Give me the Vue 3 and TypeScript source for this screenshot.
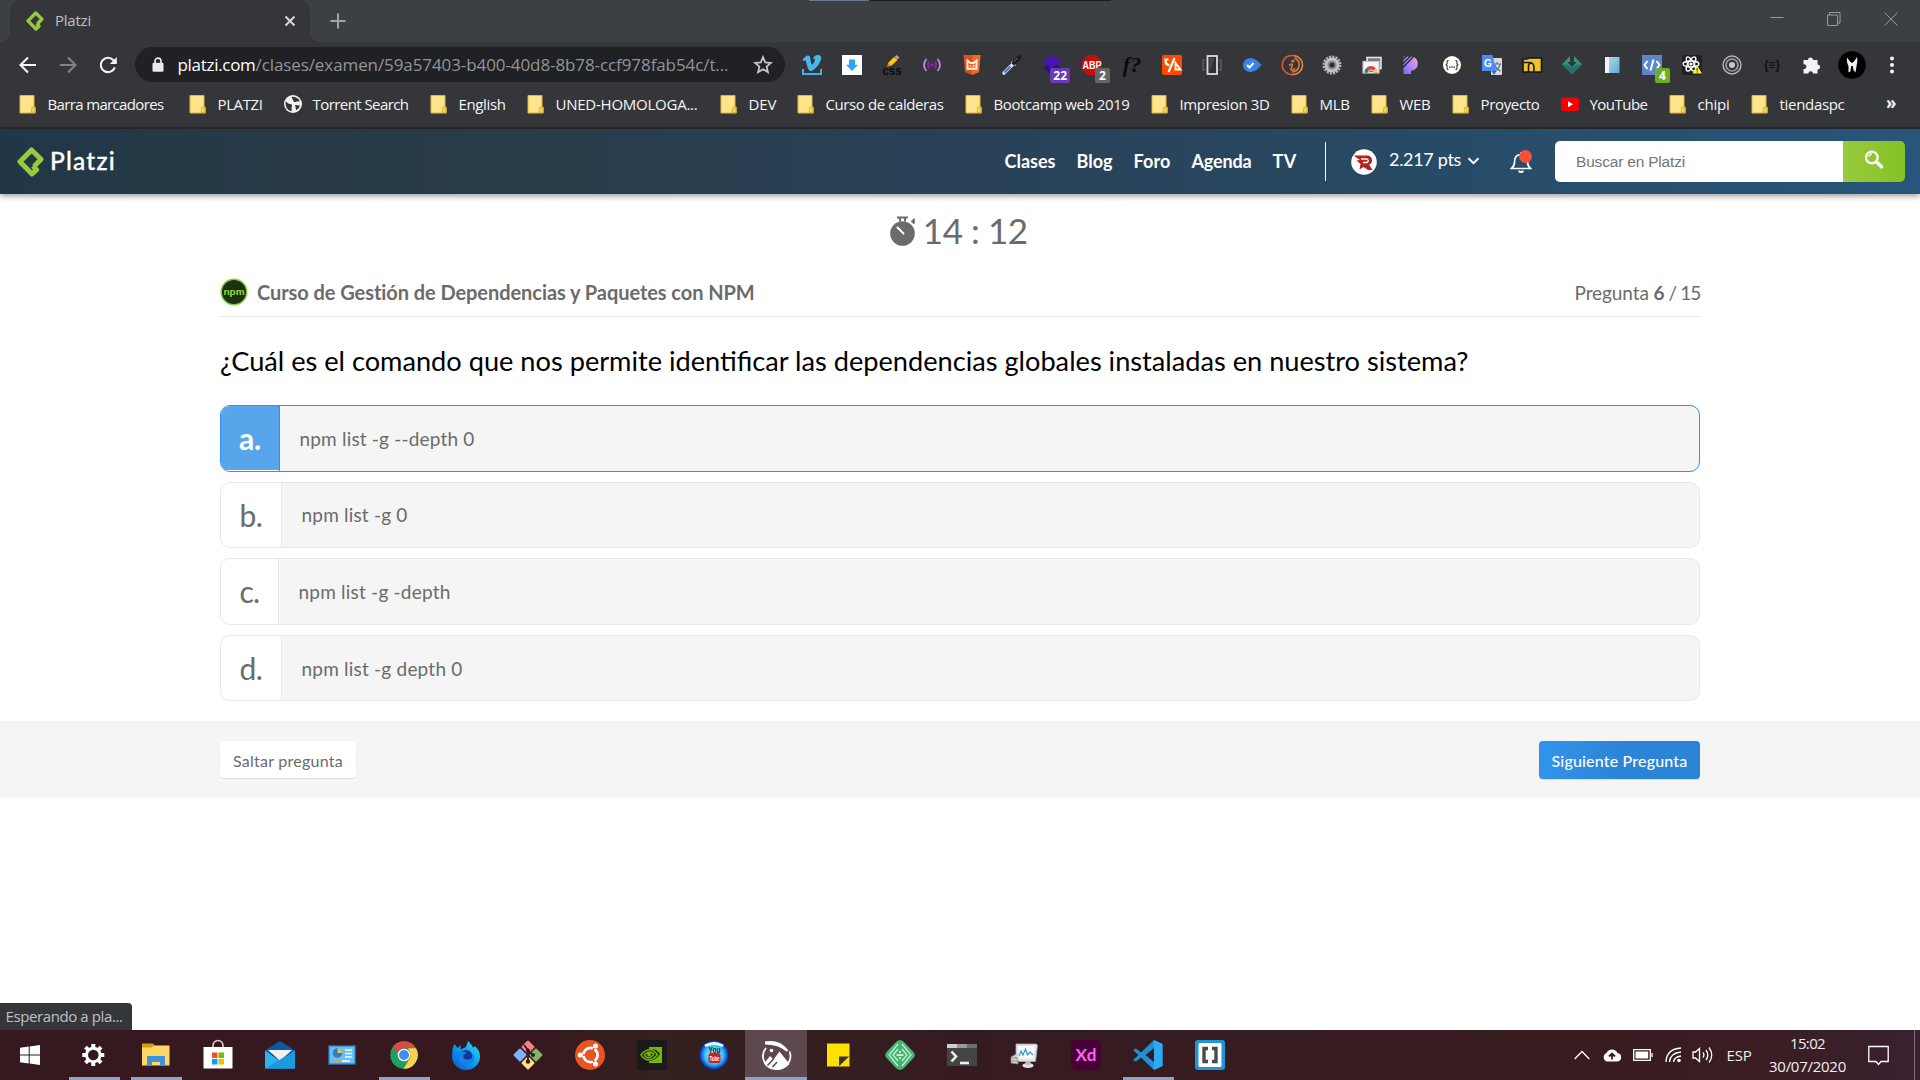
<script setup lang="ts">
import type { Directive } from 'vue'

interface Bookmark { x: number; icon: string; label: string; w: number }
interface Extension { name: string; art: string; badge?: string; tone?: string }
interface Choice { letter: string; text: string; box: number; lw: number; tw: number; selected?: boolean }
interface TaskItem { name: string; art: string; running?: boolean; active?: boolean }

// Spreads a label over a fixed advance width by adjusting its tracking,
// or its type size when the .size modifier is set (keeps ligatures).
const vFit: Directive<HTMLElement, number, 'size'> = {
  mounted(el, binding) {
    const n = (el.textContent ?? '').length
    if (!n) return
    const w = el.getBoundingClientRect().width
    if (binding.modifiers.size) {
      const size = parseFloat(getComputedStyle(el).fontSize)
      el.style.fontSize = `${((size * binding.value) / w).toFixed(3)}px`
    } else {
      el.style.letterSpacing = `${((binding.value - w) / n).toFixed(3)}px`
    }
  },
}

const folder = '<path d="M4 3.5H18V15h1.2v6H4z" fill="#ffe48c" stroke="#d9b93f" stroke-width="1"/><path d="M15.8 15.3H19v5.4H15z" fill="#f7d552" stroke="#cfae2c" stroke-width=".8"/>'
const globe = '<circle cx="12" cy="12" r="9" fill="#f1f3f4"/><path d="M4.6 9.5c2 1 2.6 2.6 4.6 2.6 1.6.2 2.2 1.2 1.6 2.4-.6 1.3.2 2.4-.2 4.7C7 18.7 4 15.500 4.600 9.500zM11 4.800c3-.5 6.500 1.500 7.800 4.200-1.500 1-2.800.2-3.800.8-1.200.8-2.800 0-2.700-1.300.1-1.200-2-1.600-1.300-3.700zM14 13c2 0 3 .8 5 .2-.4 2-2 4-4 5-.4-2-.2-3-1-5.200z" fill="#35363a"/>'
const youtube = '<rect x="3" y="5.500" width="18" height="13.500" rx="3" fill="#f60000"/><path d="M10 9.300l5 3-5 3z" fill="#fff"/>'

const bookmarks: Bookmark[] = [
  { x: 16, icon: folder, label: 'Barra marcadores', w: 116 },
  { x: 186, icon: folder, label: 'PLATZI', w: 45 },
  { x: 281, icon: globe, label: 'Torrent Search', w: 96 },
  { x: 427, icon: folder, label: 'English', w: 47 },
  { x: 524, icon: folder, label: 'UNED-HOMOLOGA...', w: 142 },
  { x: 717, icon: folder, label: 'DEV', w: 28 },
  { x: 794, icon: folder, label: 'Curso de calderas', w: 118 },
  { x: 962, icon: folder, label: 'Bootcamp web 2019', w: 136 },
  { x: 1148, icon: folder, label: 'Impresion 3D', w: 90 },
  { x: 1288, icon: folder, label: 'MLB', w: 30 },
  { x: 1368, icon: folder, label: 'WEB', w: 31 },
  { x: 1449, icon: folder, label: 'Proyecto', w: 59 },
  { x: 1558, icon: youtube, label: 'YouTube', w: 58 },
  { x: 1666, icon: folder, label: 'chipi', w: 32 },
  { x: 1748, icon: folder, label: 'tiendaspc', w: 65 },
  { x: 1880, icon: '', label: '', w: 0 },
]
const slotWidth = (i: number) => bookmarks[i + 1].x - bookmarks[i].x

const mono = 'font-family="Liberation Sans, Arial, sans-serif"'
const extensions: Extension[] = [
  { name: 'vimeo', art: '<path d="M3 16v5h18v-5" fill="none" stroke="#3db2ea" stroke-width="2"/><path d="M2.500 6.500c2-2 4-4 5.500-4 2.500 0 2.200 3 2.900 6 .4 2 .7 3 1.200 3 .8 0 2.800-3.300 2.800-4.600 0-1.200-1-1.200-2-.8.8-2.600 2.500-4 5-4 2.200 0 3.500 1.200 3.300 3.400-.3 4.500-7 12.500-10.500 12.500-2.500 0-3.300-4.500-4.400-8.500C5.700 7.500 5.500 7 3.500 8z" fill="#46b8ee"/>' },
  { name: 'download', art: '<rect x="2" y="2" width="20" height="20" fill="#fff"/><path d="M9 6.500h6v5.300h3L12 18l-6-6.200h3z" fill="#30a4f2"/>' },
  { name: 'css', art: `<path d="M8.500 9.500l5.500-5.500 3.500 3-6 5.500-4 1z" fill="#fc0"/><path d="M14.500 3.700L16.500 2l3 2.500-2 2z" fill="#e98b95"/><path d="M8.500 9.500L7 13.500l3.500-1z" fill="#d88a10"/><text x="12" y="21.500" text-anchor="middle" ${mono} font-size="12" font-weight="700" fill="#0c0c0c" textLength="19" lengthAdjust="spacingAndGlyphs">css</text>` },
  { name: 'signal', art: '<g fill="none" stroke="#b052cd" stroke-width="1.800"><path d="M9 8.500q-2 3.500 0 7M15 8.500q2 3.500 0 7" stroke="#8e24aa"/><path d="M6.500 6q-5 6 0 12M17.500 6q5 6 0 12" stroke="#c58ae0"/></g><circle cx="12" cy="12" r="1.700" fill="#8e24aa"/>' },
  { name: 'html cat', art: '<path d="M3.500 2h17l-1.500 17-7 3-7-3z" fill="#dd5019"/><path d="M12 2h8.500L19 19l-7 3z" fill="#ec6a21"/><path d="M7.500 15.800V7.500l3 2.500h3l3-2.500v8.300z" fill="none" stroke="#ffeee4" stroke-width="1.900"/><path d="M9.700 13h1.600M12.900 13h1.600" stroke="#fff" stroke-width="1.300"/>' },
  { name: 'picker', art: '<path d="M4 20l8-8" stroke="#dfe3ea" stroke-width="3.400" stroke-linecap="round"/><path d="M4.500 19.500l6-6" stroke="#3d6be0" stroke-width="2"/><path d="M11.500 8.500l4 4" stroke="#aaa" stroke-width="1.800"/><path d="M14 10l5.500-6" stroke="#17191c" stroke-width="3.800" stroke-linecap="round"/><path d="M14.500 8.500l3-3.500" stroke="#777" stroke-width="1"/>' },
  { name: 'layers', art: '<path d="M12 9l9 6-9 7-9-7z" fill="#2c0f87"/><path d="M12 2l10 6.500-10 7L2 9z" fill="#4614b0"/>', badge: '22', tone: '#673ab7' },
  { name: 'abp', art: `<path d="M8 2h8.500L22 8v8l-5.500 6H8L2 16V8z" fill="#c70d0d"/><text x="12" y="15.800" text-anchor="middle" ${mono} font-size="10" font-weight="700" fill="#fff" textLength="19" lengthAdjust="spacingAndGlyphs">ABP</text>`, badge: '2', tone: '#666' },
  { name: 'font finder', art: '<text x="12" y="19" text-anchor="middle" font-family="Liberation Serif, serif" font-style="italic" font-weight="700" font-size="22" fill="#0b0b0b">f?</text>' },
  { name: 'tag', art: '<rect x="2" y="2" width="20" height="20" rx="2" fill="#fe4a00"/><path d="M8.500 6.500H5.500l.5 4 3 2M14.500 5l-6 14" stroke="#fff" stroke-width="2.200" fill="none"/><path d="M15.500 10v6.500h5z" fill="none" stroke="#fff" stroke-width="1.900"/>' },
  { name: 'viewport', art: '<path d="M5 7H3v10h2M19 7h2v10h-2" stroke="#5e6063" stroke-width="1.400" fill="none"/><rect x="7.500" y="3" width="9.500" height="18" fill="#2e3033" stroke="#dcdcdc" stroke-width="1.800"/><path d="M9.500 19V5h5z" fill="#484a4c"/>' },
  { name: 'check tag', art: '<path d="M10 5c4 0 7 2 11.500 7C17 17 14 19 10 19a7 7 0 010-14z" fill="#3b82e6"/><path d="M7 12l2.500 2.500L13.500 10" stroke="#fff" stroke-width="2" fill="none"/>' },
  { name: 'info ring', art: '<g fill="none" stroke-width="1.600"><path d="M17 4A9.500 9.500 0 1012 21.500" stroke="#e2572d"/><path d="M14 2.500a9.500 9.500 0 01-2 19" stroke="#e08b3d"/><path d="M9 12.500q4-3 3.200 0l-1.300 4q2.500 1.500 4-1.500M14.500 5q5.500 2.500 4.500 8t-7 6" stroke="#e8743a"/></g><circle cx="13" cy="8" r="1.600" fill="#e8743a"/>' },
  { name: 'gear', art: '<circle cx="12" cy="12" r="8.300" fill="none" stroke="#b4b4b4" stroke-width="2.400" stroke-dasharray="2.100 1.160"/><circle cx="12" cy="12" r="7.400" fill="#c4c4c4"/><circle cx="12" cy="12" r="4.600" fill="#8a8a8a"/><circle cx="12" cy="12" r="2.500" fill="#2b2b2d"/>' },
  { name: 'windows', art: '<rect x="7" y="4.500" width="14" height="11" fill="#777" stroke="#e3e3e3" stroke-width="1.600"/><rect x="3" y="8.500" width="16" height="11.500" fill="#f7f7f7" stroke="#c6c6c6" stroke-width="1.200"/><path d="M4.500 19.500a6.500 6.500 0 0113 0z" fill="#da4437"/><path d="M4.500 19.500a6 6 0 012-4.500l3 4.500z" fill="#139d58"/><path d="M17.500 19.500a6 6 0 00-2-4.500l-3 4.500z" fill="#ffcd40"/><path d="M8.300 19.500a2.700 2.700 0 015.400 0z" fill="#4285f4" stroke="#fff" stroke-width=".7"/>' },
  { name: 'pandora', art: '<defs><linearGradient id="pg" x1="0" y1="1" x2="1" y2="0"><stop offset="0" stop-color="#7666f0"/><stop offset=".5" stop-color="#b48af0"/><stop offset="1" stop-color="#f0a0d0"/></linearGradient></defs><path d="M3.500 21V3.500H13a7.500 7.500 0 010 14h-2V21z" fill="url(#pg)"/><path d="M3 6.500l4-4M3 10.500l8-8M3 14.500L14 3" stroke="#2d2c3a" stroke-width="1.500"/>' },
  { name: 'json', art: `<circle cx="12" cy="12" r="9" fill="#fff"/><text x="12" y="15.300" text-anchor="middle" ${mono} font-size="10.500" font-weight="700" fill="#333" textLength="13" lengthAdjust="spacingAndGlyphs">{...}</text>` },
  { name: 'translate', art: `<rect x="11" y="5" width="11" height="17" rx="1" fill="#d9dbde"/><path d="M13.500 11h7.500M17 9v2M15 18q4-2 5-7M15 12q1 4 5.500 6" stroke="#5c7084" stroke-width="1.200" fill="none"/><path d="M2 2h10.500l4 16H2z" fill="#4c8bf5"/><path d="M11.500 18h5l-2.500 4z" fill="#3367d6"/><text x="8" y="13.500" text-anchor="middle" ${mono} font-size="10" font-weight="700" fill="#fff">G</text>` },
  { name: 'yellow n', art: '<path d="M3 6h4l2-1h12.500v14H3z" fill="#f1c232" stroke="#14171c" stroke-width="1.600"/><path d="M3.500 9.500H9q5 0 5 5V19M8.500 19v-5.500q0-3.500 3-3.500" fill="none" stroke="#191d22" stroke-width="1.600"/>' },
  { name: 'arrow gem', art: '<path d="M10 3v6H7l5 5 5-5h-3V3l8 8.500L12 21 2 11.500z" fill="#2f9a80"/><path d="M2 11.500h5l5 3.500 5-3.500h5L12 21z" fill="#27706f"/>' },
  { name: 'notebook', art: '<defs><linearGradient id="nb" x1="0" y1="0" x2="1" y2="1"><stop offset="0" stop-color="#b9e0f0"/><stop offset="1" stop-color="#5fa9cf"/></linearGradient></defs><rect x="5" y="4" width="14.500" height="16" fill="url(#nb)"/><rect x="5" y="4" width="4" height="16" fill="#f1f5fb"/>' },
  { name: 'code', art: '<rect x="2" y="2" width="20" height="20" fill="#5c86c9"/><path d="M7.500 8L4.500 12l3 4M16.500 8l3 4-3 4M13.500 6.500l-3 11" stroke="#fff" stroke-width="2" fill="none"/>', badge: '4', tone: '#6cae28' },
  { name: 'react', art: '<rect x="2" y="2" width="20" height="20" rx="2" fill="#202020"/><g fill="none" stroke="#fff" stroke-width="1.300"><ellipse cx="11" cy="11" rx="8" ry="3"/><ellipse cx="11" cy="11" rx="8" ry="3" transform="rotate(60 11 11)"/><ellipse cx="11" cy="11" rx="8" ry="3" transform="rotate(120 11 11)"/></g><circle cx="11" cy="11" r="1.600" fill="#fff"/><path d="M17 12l5 8.500H12.500z" fill="#ffee3c"/><path d="M17.200 15v2.800M17.200 18.600v1" stroke="#333" stroke-width="1.200"/>' },
  { name: 'rings', art: '<g fill="none" stroke="#b5b6b8"><circle cx="12" cy="12" r="9" stroke-width="1.400"/><circle cx="12" cy="12" r="6" stroke-width="1.700" stroke="#9b9c9e"/></g><circle cx="12" cy="12" r="3" fill="#c9c9cb"/>' },
  { name: 'braces', art: `<text x="12" y="15.800" text-anchor="middle" ${mono} font-size="12" font-weight="700" fill="#101113" textLength="16" lengthAdjust="spacingAndGlyphs">{≡}</text>` },
  { name: 'puzzle', art: '<path d="M3.500 7.500H8a2.500 2.500 0 115 0h4.500V12a2.500 2.500 0 110 5v4H13a2.300 2.300 0 10-4.600 0H3.500v-4.500a2.400 2.400 0 100-4.700z" fill="#f1f3f4" transform="translate(0 -.5)"/>' },
]

const choices: Choice[] = [
  { letter: 'a.', text: 'npm list -g --depth 0', box: 58, lw: 22, tw: 175, selected: true },
  { letter: 'b.', text: 'npm list -g 0', box: 60, lw: 23, tw: 106 },
  { letter: 'c.', text: 'npm list -g -depth', box: 57, lw: 20, tw: 152 },
  { letter: 'd.', text: 'npm list -g depth 0', box: 60, lw: 23, tw: 161 },
]

const nav = [
  { label: 'Clases', w: 51 },
  { label: 'Blog', w: 36 },
  { label: 'Foro', w: 37 },
  { label: 'Agenda', w: 60 },
  { label: 'TV', w: 24 },
]

// Taskbar glyphs, drawn on a 32 x 32 grid.
const tasks: TaskItem[] = [
  { name: 'settings', running: true, art: '<g transform="translate(-.7 0)"><g stroke="#fff" stroke-width="4"><path d="M16 5v22M8.200 8.200l15.600 15.600M5 16h22M8.200 23.800L23.800 8.200"/></g><circle cx="16" cy="16" r="8.300" fill="#fff"/><circle cx="16" cy="16" r="5.300" fill="#35191e"/></g>' },
  { name: 'explorer', running: true, art: '<path d="M2 4.500h11l2 2.500v4H2z" fill="#dd9b0c"/><path d="M2 8.500h9.500L14 6.500h15.500v20H2z" fill="#ffd766"/><path d="M7 27v-9q0-1 1-1h16q1 0 1 1v9h-5v-4h-8v4z" fill="#3d94d8"/>' },
  { name: 'store', art: '<path d="M11 9V6.500a4 4 0 0110 0V9" fill="none" stroke="#d8d0d1" stroke-width="1.600"/><path d="M1.500 8h29v21.500h-29z" fill="#fff"/><path d="M10 13.500h5.500V19H10z" fill="#f25022"/><path d="M16.500 13.500H22V19h-5.500z" fill="#7fba00"/><path d="M10 20h5.500v5.500H10z" fill="#00a4ef"/><path d="M16.500 20H22v5.500h-5.500z" fill="#ffb900"/>' },
  { name: 'mail', art: '<path d="M1 11.500L16 2l15 9.500v4H1z" fill="#0c59a4"/><path d="M4 11h24L16 22z" fill="#f1f1f1"/><path d="M1 11.500l15 10.500 15-10.500v18H1z" fill="#2eb1ef"/><path d="M1 29.500L31 11.500v18z" fill="#1a9be0"/>' },
  { name: 'control', art: '<rect x="3" y="7" width="26" height="18" fill="#6cc0f0" stroke="#2f7fc0" stroke-width="1.300"/><circle cx="11.500" cy="14" r="4.800" fill="#2c7fc8"/><path d="M11.500 14V9.200a4.800 4.800 0 014.800 4.800z" fill="#f4b942"/><path d="M19 11h7M19 14.500h7M19 18h7" stroke="#e6f5ff" stroke-width="1.700"/><path d="M7 22h17" stroke="#fff" stroke-width="1.500"/><path d="M7 22h9" stroke="#d88b16" stroke-width="1.500"/>' },
  { name: 'chrome', running: true, art: '<circle cx="16" cy="16" r="13.700" fill="#1fa15d"/><path d="M16 2.300a13.700 13.700 0 0111.900 7H16a7 7 0 00-6 3.500L4.600 8.300A13.700 13.700 0 0116 2.300z" fill="#dc4b3e"/><path d="M28 9.300a13.700 13.700 0 01-12.500 20.400l6.500-10.500q1.500-5-2-9.900z" fill="#ffd04b"/><circle cx="16" cy="16" r="6.300" fill="#fff"/><circle cx="16" cy="16" r="5" fill="#4688f4"/>' },
  { name: 'firefox', art: '<defs><linearGradient id="ff" x1="1" y1="0" x2="0" y2="1"><stop offset="0" stop-color="#2ce0f5"/><stop offset=".5" stop-color="#0b9cf2"/><stop offset="1" stop-color="#0653c8"/></linearGradient></defs><path d="M3 8l1.500-3 3 4 3-3v4.500L16 8l2-6q5 5 5 7l1.500-2Q30 11 30 17.500A14 13.500 0 012 17.500Q2 12 3 8z" fill="url(#ff)"/><circle cx="16" cy="17.500" r="6.500" fill="#14359a"/><path d="M8 14q5-3 9 0-3 1-4 3 1 4 5 3.500 5 0 5-6 3 5-1 9.500-8 4-13-3-2-4-1-7z" fill="#1683ec"/>' },
  { name: 'git', art: '<g transform="rotate(45 16 16)"><rect x="5.500" y="5.500" width="9.700" height="9.700" rx="1" fill="#f77f8b"/><rect x="16.800" y="5.500" width="9.700" height="9.700" rx="1" fill="#80b963"/><rect x="5.500" y="16.800" width="9.700" height="9.700" rx="1" fill="#80b3ff"/><rect x="16.800" y="16.800" width="9.700" height="9.700" rx="1" fill="#ffe080"/></g><path d="M12 6l4 5v13M16 12l5 4" stroke="#35191e" stroke-width="1.800" fill="none"/><circle cx="16" cy="22.500" r="2.200" fill="#35191e"/><circle cx="21" cy="16" r="2" fill="#35191e"/><circle cx="16" cy="11.500" r="2" fill="#35191e"/>' },
  { name: 'ubuntu', art: '<circle cx="16" cy="16" r="15" fill="#e95420"/><circle cx="16.500" cy="16" r="7" fill="none" stroke="#fff" stroke-width="3"/><path d="M16 16L5 16M16 16l6-10M16 16l6 10" stroke="#e95420" stroke-width="1.600"/><circle cx="16.500" cy="16" r="5.500" fill="#e95420"/><circle cx="6.200" cy="16" r="2.500" fill="#fff"/><circle cx="21.500" cy="7" r="2.500" fill="#fff"/><circle cx="21.500" cy="25" r="2.500" fill="#fff"/>' },
  { name: 'nvidia', art: '<rect x="1" y="1" width="30" height="30" fill="#1a1a1a"/><path d="M13 8h13v16H13z" fill="#76b900"/><path d="M4 15.500q7-8 16-4.500l4 4q-5 7-12 7.500Q6 21 4 15.500z" fill="#1a1a1a"/><path d="M5 15.500q7-7 13-3.500l3.500 3.500Q17 21 12 21q-5-1-7-5.500zM8.500 15.500q5-4.500 9.500-.5-4 5-7 3.500-2-1-2.500-3z" fill="none" stroke="#76b900" stroke-width="1.500"/><circle cx="13" cy="15.500" r="2" fill="#76b900"/>' },
  { name: 'youtube dl', art: `<defs><radialGradient id="yd"><stop offset="0" stop-color="#c6f8ff"/><stop offset=".65" stop-color="#33c0f6"/><stop offset="1" stop-color="#0727b8"/></radialGradient></defs><circle cx="16" cy="16" r="14.500" fill="url(#yd)"/><path d="M7 7q9-5 18 0" stroke="#e8fcff" stroke-width="3" fill="none"/><rect x="10.500" y="14" width="12" height="10" rx="2.500" fill="#d21f1b"/><text x="16.500" y="13.500" text-anchor="middle" ${mono} font-size="9" font-weight="700" fill="#222" textLength="12" lengthAdjust="spacingAndGlyphs">You</text><text x="16.500" y="22" text-anchor="middle" ${mono} font-size="8" font-weight="700" fill="#fff" textLength="10" lengthAdjust="spacingAndGlyphs">Tube</text>` },
  { name: 'greenshot', running: true, active: true, art: '<path d="M5 2.500q15-2.500 23.500 9l-2 1Q18.500 5.500 5 5.500z" fill="#fff"/><path d="M6 9a13.700 13 0 1023.500 3.500" fill="none" stroke="#fff" stroke-width="1.800"/><path d="M4 24.500l6-7.500 3.500 3.500 6-8 10 12.500q-5 5.500-13 5.500T4 24.500z" fill="#fff"/><path d="M7.500 26.500l6-6.500M17 23l-4.500 5" stroke="#5c484d" stroke-width="1.500"/><circle cx="11.500" cy="11.500" r="1.800" fill="#fff"/>' },
  { name: 'notes', art: '<path d="M5 4.500h22.500V17L18 27.500H5z" fill="#ffe100"/><path d="M17 27.500V17.500h10.500z" fill="#3a3430"/><path d="M17 27.500L27.500 17v10.500z" fill="#ffe100"/>' },
  { name: 'emerald', art: '<path d="M16 1q2.500 0 5 3l8.500 9q2.500 3 0 6L21 28q-5 6-10 0l-8.500-9q-2.500-3 0-6L11 4q2.500-3 5-3z" fill="#48b274"/><path d="M14 5L5 16l9 11M18 5l9 11-9 11M14 10l-5 6 5 6M18 10l5 6-5 6" fill="none" stroke="#c1efd2" stroke-width="1.300"/><path d="M12.500 16h7M15 13h2M15 19h2" stroke="#eafff0" stroke-width="1.500"/>' },
  { name: 'terminal', art: '<rect x="1" y="5" width="30" height="22" rx="1" fill="#444"/><path d="M1 5h10v4H1z" fill="#d0d0d0"/><path d="M11 5h10v4H11z" fill="#999"/><path d="M21 5h10v4H21z" fill="#6d6d6d"/><path d="M5.500 12.500L10 17.500l-4.500 5" stroke="#eee" stroke-width="2.600" fill="none"/><path d="M14 24h9" stroke="#eee" stroke-width="2.600"/>' },
  { name: 'monitor', art: '<path d="M3 18l7-4v11l-7-1z" fill="#d6d6d6" stroke="#888" stroke-width=".8"/><path d="M8 5h20l1.500 1-2 16.500H11L8 20z" fill="#e4e4e4" stroke="#aaa" stroke-width=".8"/><path d="M10 7h17l-1.500 12.500H10.500z" fill="#f7fbff"/><path d="M11 17l2-5 2 4 2.500-6 2 6 2.500-3 3 3" fill="none" stroke="#3d94d6" stroke-width="1.200"/><path d="M3.500 19h7M3.500 22h7" stroke="#777" stroke-width=".8"/><ellipse cx="20" cy="26.500" rx="5.500" ry="2.600" fill="#e5e5e5"/><path d="M17.500 22h5v4h-5z" fill="#bbb"/>' },
  { name: 'xd', art: '<rect x="1" y="1" width="30" height="30" rx="5" fill="#470137"/><text x="16" y="22" text-anchor="middle" font-family="Lato, sans-serif" font-size="17" font-weight="700" fill="#ff61f6" textLength="21">Xd</text>' },
  { name: 'code', running: true, art: '<path d="M22 1l8.500 4v22L22 31 9 18.500 4 22.500l-3-1.500 5.500-5L1 11l3-1.500 5 4z" fill="#1f8fd8"/><path d="M22 9l-8.500 7 8.500 7z" fill="#35191e"/><path d="M22 1l8.500 4v22L22 31z" fill="#2fa9f3"/>' },
  { name: 'brackets', art: '<rect x="1" y="1" width="30" height="30" rx="3" fill="#1d95d6"/><rect x="4.500" y="4" width="23" height="24" rx="1.500" fill="#fff"/><path d="M14 9.500H10v13h4M18 9.500h4v13h-4" fill="none" stroke="#4a4a4a" stroke-width="3.400"/>' },
]
</script>

<template>
  <div class="desktop">
    <div class="tabstrip">
      <span class="edge left"></span>
      <div class="tab">
        <svg class="favicon" viewBox="0 0 27 30"><path d="M17 19.500L24 12.200L14.500 3L3 14.800L15 27L19.500 22.800L16 19" /></svg>
        <span class="tab-title" v-fit="36">Platzi</span>
        <svg class="tab-close" viewBox="0 0 12 12"><path d="M1.500 1.500l9 9M10.500 1.500l-9 9" /></svg>
      </div>
      <span class="edge right"></span>
      <svg class="new-tab" viewBox="0 0 16 16"><path d="M8 .5v15M.5 8h15" /></svg>
      <span class="top-mark"></span>
      <div class="win">
        <svg viewBox="0 0 14 14"><path d="M.5 5.500h13" /></svg>
        <svg viewBox="0 0 14 14"><path d="M.5 3h10v10.500H.5zM2.500 3V.5H13V11H10.500" /></svg>
        <svg viewBox="0 0 14 14"><path d="M.5 .5l13 13M13.500 .5l-13 13" /></svg>
      </div>
    </div>

    <div class="toolbar">
      <svg class="tool" viewBox="0 0 20 20"><path d="M18 10H3M10 2.500L2.500 10l7.500 7.500" /></svg>
      <svg class="tool dim" viewBox="0 0 20 20"><path d="M2 10h15M10 2.500l7.500 7.500-7.500 7.500" /></svg>
      <svg class="tool" viewBox="0 0 20 20"><path d="M16.800 12.300a7.200 7.200 0 11-1.600-7.400L17 7" /><path class="solid" d="M18.800 2v7h-7z" /></svg>
      <div class="omnibox">
        <svg class="lock" viewBox="0 0 12 16"><path d="M3 7V4.200a3 3 0 016 0V7" fill="none" stroke="#e8eaed" stroke-width="1.700" /><rect x=".5" y="5.800" width="11" height="9" rx="1.200" fill="#e8eaed" /></svg>
        <span class="host" v-fit="78">platzi.com</span>
        <span class="path" v-fit="473">/clases/examen/59a57403-b400-40d8-8b78-ccf978fab54c/t...</span>
        <svg class="star" viewBox="0 0 20 20"><path d="M10 2.200l2.200 5.200 5.600.5-4.200 3.700 1.300 5.500L10 14.200l-4.900 2.900 1.300-5.500-4.200-3.700 5.600-.5z" /></svg>
      </div>
      <div class="extensions">
        <div v-for="e in extensions" :key="e.name" class="ext">
          <svg viewBox="0 0 24 24" v-html="e.art"></svg>
          <span v-if="e.badge" class="badge" :style="{ background: e.tone }">{{ e.badge }}</span>
        </div>
        <div class="ext">
          <svg class="avatar" viewBox="0 0 28 28"><circle cx="14" cy="14" r="13.800" fill="#000" /><path d="M9 6.500l3 4 2 1.500 2-1.500L19 6q1 4.500-.3 8L17.500 21.500l-2-2.500-.7-4h-1.600l-.9 5.500-1.800 1V15Q8.500 12 9 6.500z" fill="#f0f0f0" /></svg>
        </div>
        <div class="ext">
          <svg viewBox="0 0 24 24"><g fill="#f1f3f4"><circle cx="12" cy="5.500" r="2" /><circle cx="12" cy="12" r="2" /><circle cx="12" cy="18.500" r="2" /></g></svg>
        </div>
      </div>
    </div>

    <div class="bookmarks">
      <div v-for="(b, i) in bookmarks.slice(0, -1)" :key="b.label" class="bm" :style="{ width: slotWidth(i) + 'px' }">
        <svg viewBox="0 0 24 24" v-html="b.icon"></svg>
        <span v-fit="b.w">{{ b.label }}</span>
      </div>
      <span class="more">»</span>
    </div>

    <header class="header">
      <svg class="logo" viewBox="0 0 27 30"><path d="M17 19.500L24 12.200L14.500 3L3 14.800L15 27L19.500 22.800L16 19" /></svg>
      <span class="brand" v-fit="66">Platzi</span>
      <nav class="nav">
        <a v-for="n in nav" :key="n.label" v-fit="n.w">{{ n.label }}</a>
      </nav>
      <span class="rule"></span>
      <svg class="user" viewBox="0 0 26 26"><circle cx="13" cy="13" r="12.800" fill="#fff" /><path d="M2.500 6.500H17q4 1 4 5 0 3-3 4l3.500 5.500h-4.500L12.500 18 8.500 20.500l1-5.500-4-3.500 3.500-.5z" fill="#b8221e" /><path d="M10 10h6q2.500 1.500 0 3.500h-4" fill="none" stroke="#fff" stroke-width="1.400" /></svg>
      <span class="points" v-fit="72">2.217 pts</span>
      <svg class="caret" viewBox="0 0 12 8"><path d="M1 1.200l5 5 5-5" /></svg>
      <div class="bell">
        <svg viewBox="0 0 22 24"><path d="M1.500 18.500q3-2.500 3-6.500Q4.500 4.500 11 4.500T17.500 12q0 4 3 6.500zM11 4.500V2M8.500 21q2.500 2 5 0" /></svg>
        <span class="dot"></span>
      </div>
      <div class="search">
        <div class="field"><span v-fit="109">Buscar en Platzi</span></div>
        <div class="go"><svg viewBox="0 0 20 20"><circle cx="7.800" cy="7.500" r="5.800" fill="none" stroke="#fff" stroke-width="2.300" /><path d="M12.500 12l5 4.800" stroke="#fff" stroke-width="3.600" stroke-linecap="round" /><path d="M5 7a3 3 0 013-2.800" fill="none" stroke="#fff" stroke-width="1.200" /></svg></div>
      </div>
    </header>

    <main class="exam">
      <div class="timer">
        <svg viewBox="0 0 28 30"><circle cx="13.500" cy="17.500" r="12.300" fill="#6b6b6b" /><path d="M8 1.500h11M11 1.500v4M16 1.500v4M22.500 4.500l3 3M24.800 2.500v5" stroke="#6b6b6b" stroke-width="2" /><path d="M8.500 11.500l6 6" stroke="#fff" stroke-width="2" stroke-linecap="round" /></svg>
        <span v-fit="105">14 : 12</span>
      </div>

      <div class="course">
        <svg viewBox="0 0 28 28"><circle cx="14" cy="14" r="12.800" fill="#1c3012" stroke="#86cf3c" stroke-width="1.500" /><text x="14" y="16.800" text-anchor="middle" font-family="Liberation Sans, sans-serif" font-weight="700" font-size="9.500" fill="#9bdc3c" textLength="21" lengthAdjust="spacingAndGlyphs">npm</text></svg>
        <h1><span v-fit="498">Curso de Gestión de Dependencias y Paquetes con NPM</span></h1>
        <div class="progress"><span v-fit="79">Pregunta&nbsp;</span><b v-fit="11">6</b><span v-fit="36">&nbsp;/ 15</span></div>
      </div>

      <h2 class="question"><span v-fit.size="1249">¿Cuál es el comando que nos permite identificar las dependencias globales instaladas en nuestro sistema?</span></h2>

      <ul class="choices">
        <li v-for="c in choices" :key="c.letter" class="choice" :class="{ selected: c.selected }">
          <div class="letter" :style="{ width: c.box + 'px' }"><span v-fit="c.lw">{{ c.letter }}</span></div>
          <div class="answer"><span v-fit="c.tw">{{ c.text }}</span></div>
        </li>
      </ul>
    </main>

    <footer class="actions">
      <button class="btn skip"><span v-fit="110">Saltar pregunta</span></button>
      <button class="btn next"><span v-fit="136">Siguiente Pregunta</span></button>
    </footer>

    <div class="filler">
      <div class="status"><span v-fit="117">Esperando a pla...</span></div>
    </div>

    <div class="taskbar">
      <div class="start"><svg viewBox="0 0 20 20"><path d="M0 2.800l8.700-1.200v7.900H0zM9.700 1.400L20 0v9.500H9.700zM0 10.500h8.700v7.900L0 17.200zM9.700 10.500H20V20L9.700 18.600z" fill="#fff" /></svg></div>
      <div v-for="t in tasks" :key="t.name" class="task" :class="{ running: t.running, active: t.active }">
        <svg viewBox="0 0 32 32" v-html="t.art"></svg>
      </div>
      <div class="tray">
        <svg class="t-up" viewBox="0 0 16 10"><path d="M.7 9L8 1.500 15.300 9" /></svg>
        <svg class="t-cloud" viewBox="0 0 20 14"><path d="M5 13.500a4.500 4.500 0 01-.5-8.500A6 6 0 0115.500 5a4.300 4.300 0 010 8.500z" fill="#fff" stroke="none" /><path d="M10 11.500V6M7 8.500l3-3 3 3" stroke="#35191e" stroke-width="1.800" /></svg>
        <svg class="t-bat" viewBox="0 0 20 12"><path d="M.7 .7h16.600v10.600H.7zM19 4v4" /><path d="M2.500 2.500h12.700v7H2.500z" fill="#fff" stroke="none" /></svg>
        <svg class="t-wifi" viewBox="0 0 17 16"><path d="M1 15Q1.500 2 16 1M4.500 15Q5 6 16 5M8.500 15Q9 10 16 9" /><circle cx="14" cy="13.500" r="1.800" fill="#fff" stroke="none" /></svg>
        <svg class="t-vol" viewBox="0 0 21 18"><path d="M1 6v6h2.500L7.500 15.500v-13L3.500 6zM11 6.500q1.800 2.500 0 5M14 4q3.600 5 0 10M17 1.500q5.500 7.500 0 15" /></svg>
        <span class="lang" v-fit="25">ESP</span>
        <div class="clock"><span v-fit="35">15:02</span><span v-fit="77">30/07/2020</span></div>
        <svg class="t-note" viewBox="0 0 21 21"><path d="M.8 1.500h19.400v15H13L10.500 19.500 8 16.500H.8z" /></svg>
        <span class="peek"></span>
      </div>
    </div>
  </div>
</template>

<style>
html, body { margin: 0; overflow: hidden; background: #fff; }
</style>

<style scoped>
.desktop { width: 1920px; height: 1080px; display: flex; flex-direction: column; background: #fff; font-family: "Open Sans", "Noto Sans", sans-serif; overflow: hidden; }
.desktop * { box-sizing: border-box; }
.desktop span, .desktop a, .desktop b { white-space: nowrap; flex: none; }
svg { flex: none; display: block; }

.tabstrip { height: 42px; flex: none; display: flex; background: #3d4043; position: relative; }
.edge { width: 10px; height: 42px; }
.edge.left { background: radial-gradient(circle at 0 0, transparent 9.500px, #35363a 10px) 0 32px / 10px 10px no-repeat; }
.edge.right { background: radial-gradient(circle at 10px 0, transparent 9.500px, #35363a 10px) 0 32px / 10px 10px no-repeat; }
.tab { width: 300px; background: #35363a; border-radius: 10px 10px 0 0; display: flex; align-items: center; padding: 0 14px 0 16px; }
.favicon { width: 18px; height: 20px; margin-right: 11px; }
.favicon path, .logo path { fill: none; stroke: #98ca3f; stroke-width: 5; stroke-linejoin: round; }
.tab-title { font-size: 15px; line-height: 20px; color: #bdc1c6; margin-top: -2px; }
.tab-close { width: 12px; height: 12px; margin-left: auto; stroke: #d5d7d9; stroke-width: 2; }
.new-tab { width: 16px; height: 16px; margin: 13px 0 0 9.500px; stroke: #a2a5a8; stroke-width: 2; }
.top-mark { position: absolute; left: 809px; top: 0; width: 302px; height: 1px; background: linear-gradient(90deg, #687998 60px, #1c1d1e 60px); }
.win { margin-left: auto; display: flex; gap: 43px; padding: 12px 22px 0 0; }
.win svg { width: 14px; height: 14px; fill: none; stroke: #999c9e; stroke-width: 1; }

.toolbar { height: 45px; flex: none; background: #35363a; display: flex; align-items: center; padding-left: 18px; }
.tool { width: 20px; height: 20px; margin-right: 20px; fill: none; stroke: #f1f3f4; stroke-width: 2.100; }
.tool.dim { stroke: #818386; }
.tool .solid { fill: #f1f3f4; stroke: none; }
.omnibox { width: 650px; height: 35px; margin-left: -3px; border-radius: 18px; background: #202124; display: flex; align-items: center; padding-left: 16.500px; font-size: 17px; }
.lock { width: 12px; height: 16px; margin-right: 14px; }
.host { color: #fff; }
.path { color: #929598; }
.star { width: 20px; height: 20px; margin-left: 24px; fill: none; stroke: #c6c8ca; stroke-width: 1.800; }
.extensions { display: flex; margin-left: 7px; }
.ext { width: 40px; height: 40px; position: relative; display: flex; align-items: center; justify-content: center; }
.ext svg { width: 24px; height: 24px; }
.ext .avatar { width: 28px; height: 28px; }
.badge { position: absolute; right: 2px; bottom: 2px; min-width: 15px; height: 15px; border-radius: 2px; padding: 0 3px; color: #fff; font-size: 12px; font-weight: 700; line-height: 16px; text-align: center; }

.bookmarks { height: 42px; flex: none; background: #35363a; border-bottom: 2px solid #28292b; display: flex; padding: 0 24px 6px 16px; align-items: center; font-size: 15px; line-height: 20px; color: #f4f5f6; }
.bm { display: flex; align-items: center; flex: none; }
.bm svg { width: 24px; height: 24px; margin: 0 7.500px 0 0; }
.bm span { margin-top: -1px; }
.more { margin-left: 6px; font-size: 17px; font-weight: 700; line-height: 20px; margin-top: -3px; }

.header { height: 65px; flex: none; position: relative; display: flex; align-items: center; padding-left: 17px; font-family: Lato, sans-serif; color: #fff; background: linear-gradient(90deg, #213746 0, #273947 14%, #293c4a 30%, #284259 53%, #28475f 66%, #274f6e 84%, #28557a 100%); box-shadow: 0 2px 6px rgba(0, 0, 0, .4); }
.logo { width: 27px; height: 30px; margin-right: 6px; }
.brand { font-size: 24.500px; line-height: 30px; margin-top: -1px; font-weight: 500; -webkit-text-stroke: .3px #fff; }
.nav { display: flex; gap: 21px; margin-left: 888.500px; font-size: 18px; font-weight: 700; line-height: 22px; margin-top: -2px; width: 292px; }
.rule { width: 1px; height: 39px; background: #fff; margin-left: 28.500px; }
.user { width: 26px; height: 26px; margin-left: 25px; }
.points { font-size: 18px; line-height: 22px; margin: -5px 0 0 12px; }
.caret { width: 13px; height: 8px; margin: -1px 0 0 5.500px; fill: none; stroke: #fff; stroke-width: 2; }
.bell { width: 22px; height: 24px; margin-left: 30px; position: relative; }
.bell svg { width: 22px; height: 24px; fill: none; stroke: #fff; stroke-width: 1.700; }
.dot { position: absolute; left: 9px; top: 0; width: 13px; height: 13px; border-radius: 50%; background: #fa5036; }
.search { display: flex; width: 350px; height: 41px; margin-left: auto; margin-right: 15px; border-radius: 5px; overflow: hidden; }
.field { width: 288px; background: #fff; display: flex; align-items: center; padding-left: 21px; font: 15.500px "Liberation Sans", Arial, sans-serif; color: #757575; }
.go { width: 62px; background: linear-gradient(90deg, #98ca3f, #85c224); display: flex; align-items: center; justify-content: center; }
.go svg { width: 20px; height: 20px; margin-bottom: 3px; }

.exam { width: 1480px; margin: 0 auto; flex: none; height: 527px; font-family: Lato, sans-serif; color: #6b6b6b; display: flex; flex-direction: column; }
.timer { height: 72px; display: flex; justify-content: center; align-items: center; gap: 5.500px; font-size: 35px; line-height: 42px; padding-right: 3px; }
.timer svg { width: 28px; height: 30px; margin-top: 2px; }
.course { height: 51px; border-bottom: 1px solid #e8e8e8; display: flex; align-items: center; padding-top: 2px; }
.course svg { width: 28px; height: 28px; }
.course h1 { margin: 0 0 0 9px; font-size: 20px; font-weight: 700; line-height: 24px; }
.progress { margin-left: auto; font-size: 19px; line-height: 24px; display: flex; align-items: center; padding-top: 1px; margin-right: -.5px; }
.question { height: 88px; margin: 0; display: flex; align-items: center; font-size: 28px; font-weight: 400; line-height: 34px; color: #000; }
.choices { list-style: none; margin: 0; padding: 0; display: flex; flex-direction: column; gap: 10px; }
.choice { height: 66.600px; display: flex; border: 1px solid #e8e8e8; border-radius: 10px; overflow: hidden; background: #f5f5f5; }
.letter { box-sizing: content-box !important; border-right: 1px solid #e8e8e8; background: #fff; font-size: 30px; display: flex; align-items: center; justify-content: center; flex: none; }
.answer { padding-left: 19.500px; font-size: 19px; display: flex; align-items: center; }
.selected { border-color: #3192e7; }
.selected .letter { background: #58a5ec; border-color: #3192e7; box-shadow: inset 0 -1px #fff; color: #fff; font-weight: 700; }

.actions { height: 77px; flex: none; background: #f5f5f5; padding: 0 220px; display: flex; justify-content: space-between; align-items: center; }
.btn { height: 38px; border: 0; border-radius: 4px; padding: 2px 0 0; display: flex; align-items: center; justify-content: center; font: 16px Lato, sans-serif; box-shadow: 0 1px 1px rgba(0, 0, 0, .1); }
.skip { width: 136px; height: 37px; margin-bottom: 1px; padding-top: 3px; background: #fff; color: #6b6b6b; }
.next { width: 161px; color: #fff; background: linear-gradient(100deg, #3192e9 10%, #2c84d6 50%); font-weight: 500; }

.filler { flex: 1; display: flex; align-items: flex-end; }
.status { width: 132px; height: 27px; background: #35363a; border-top-right-radius: 4px; color: #bdc1c6; font-size: 15px; line-height: 27px; padding-left: 5.500px; }

.taskbar { height: 50px; flex: none; display: flex; background: linear-gradient(90deg, #35191e 0, #36191e 28%, #34201f 34%, #351b20 50%, #381c20 80%, #3a1d22 92%, #392130 100%); }
.start { width: 63px; display: flex; align-items: center; padding-left: 20px; flex: none; }
.start svg { width: 20px; height: 20px; }
.task { width: 62px; flex: none; display: flex; align-items: center; justify-content: center; position: relative; }
.task svg { width: 32px; height: 32px; }
.running::after { content: ""; position: absolute; left: 6px; bottom: 0; width: 51px; height: 3px; background: #8fa3c8; }
.active { background: #5c484d; }
.active::after { left: 0; width: 62px; }
.tray { margin-left: auto; width: 346px; flex: none; display: flex; align-items: center; color: #f4efef; font-size: 15px; }
.tray svg { fill: none; stroke: #fff; stroke-width: 1.300; }
.t-up { width: 16px; height: 10px; }
.t-cloud { width: 20px; height: 14px; margin-left: 11.500px; }
.t-bat { width: 20px; height: 12px; margin-left: 11px; }
.t-wifi { width: 17px; height: 16px; margin-left: 12px; }
.t-vol { width: 21px; height: 18px; margin-left: 10px; }
.lang { margin-left: 14px; }
.clock { display: flex; flex-direction: column; align-items: center; width: 77px; margin-left: 17.500px; line-height: 23px; height: 50px; padding-top: 2px; }
.t-note { width: 21px; height: 21px; margin-left: 22px; }
.peek { width: 1px; height: 50px; background: #806f76; margin-left: 25px; }
</style>
